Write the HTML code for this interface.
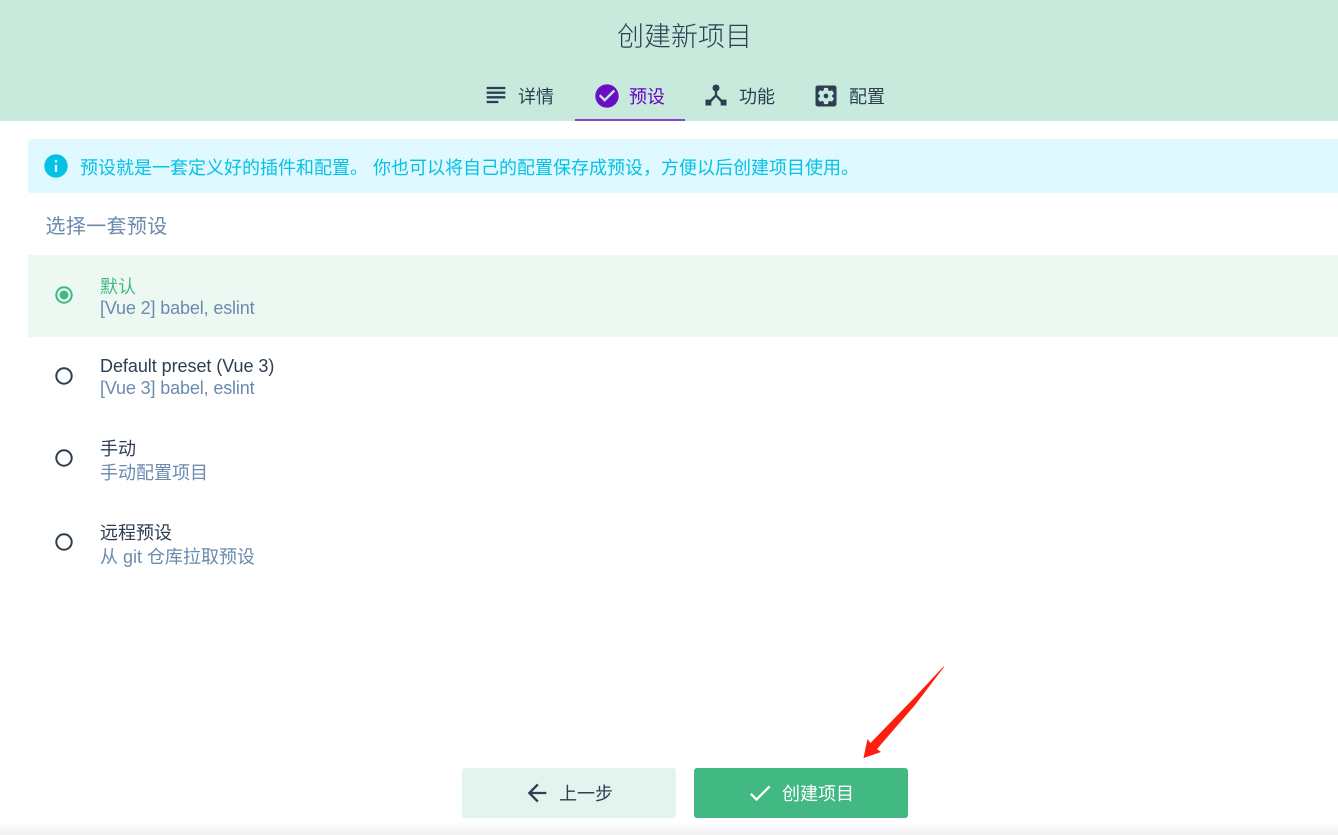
<!DOCTYPE html>
<html lang="zh">
<head>
<meta charset="utf-8">
<title>创建新项目</title>
<style>
html,body{margin:0;padding:0;width:1338px;height:835px;overflow:hidden;background:#fff}
body{position:relative;font-family:"Liberation Sans","Noto Sans CJK SC",sans-serif;color:#2c3e50}
.a{position:absolute;white-space:nowrap}
.t{font-size:18px;line-height:24px}
.sub{color:#6a8bad}
svg{position:absolute;display:block}
.i{width:28px;height:28px}
</style>
</head>
<body>
<div class="a" style="left:0;top:0;width:1338px;height:121px;background:#c7eadd"></div>
<div class="a" style="left:617px;top:17px;font-size:27px;line-height:40px;color:#2c3e50;font-weight:300">创建新项目</div>

<svg class="i" style="left:482px;top:81px" viewBox="0 0 24 24"><path fill="#2c3e50" d="M14 17H4v2h10v-2zm6-8H4v2h16V9zM4 15h16v-2H4v2zM4 5v2h16V5H4z"/></svg>
<div class="a t" style="left:518px;top:85px">详情</div>

<svg class="i" style="left:592.500px;top:81.500px" viewBox="0 0 24 24"><path fill="#6a0dc6" d="M12 2C6.480 2 2 6.480 2 12s4.480 10 10 10 10-4.480 10-10S17.520 2 12 2zm-2 15l-5-5 1.410-1.410L10 14.170l7.590-7.590L19 8l-9 9z"/></svg>
<div class="a t" style="left:629px;top:85px;color:#6a00c8">预设</div>
<div class="a" style="left:575px;top:119px;width:110px;height:2px;background:#8746c8"></div>

<svg class="i" style="left:702px;top:81px" viewBox="0 0 24 24"><path fill="#2c3e50" d="M17 16l-4-4V8.820C14.150 8.400 15 7.310 15 6c0-1.660-1.340-3-3-3S9 4.340 9 6c0 1.310.850 2.400 2 2.820V12l-4 4H3v5h5v-3.050l4-4.200 4 4.200V21h5v-5h-4z"/></svg>
<div class="a t" style="left:739px;top:85px">功能</div>

<svg class="i" style="left:812px;top:81.500px" viewBox="0 0 24 24"><path fill="#2c3e50" d="M12 10c-1.100 0-2 .9-2 2s.9 2 2 2 2-.9 2-2-.9-2-2-2zm7-7H5c-1.110 0-2 .9-2 2v14c0 1.100.890 2 2 2h14c1.110 0 2-.9 2-2V5c0-1.100-.890-2-2-2zm-1.750 9c0 .230-.020.460-.050.680l1.480 1.160c.130.110.170.300.080.450l-1.400 2.420c-.090.150-.270.210-.430.150l-1.740-.7c-.360.280-.760.510-1.180.690l-.260 1.850c-.030.170-.180.300-.350.300h-2.800c-.170 0-.320-.130-.350-.290l-.260-1.850c-.430-.180-.820-.410-1.180-.690l-1.740.7c-.160.060-.340 0-.430-.150l-1.400-2.420c-.090-.150-.050-.340.080-.450l1.480-1.160c-.030-.230-.050-.460-.050-.690 0-.230.020-.460.050-.680l-1.480-1.160c-.130-.110-.170-.300-.080-.450l1.400-2.420c.090-.150.270-.210.430-.150l1.740.7c.360-.280.760-.510 1.180-.690l.260-1.850c.030-.170.180-.300.350-.300h2.800c.170 0 .320.130.350.290l.260 1.850c.430.180.820.410 1.180.690l1.740-.7c.160-.060.340 0 .430.150l1.400 2.420c.090.150.050.340-.080.450l-1.480 1.160c.030.230.050.460.050.690z"/></svg>
<div class="a t" style="left:849px;top:85px">配置</div>

<div class="a" style="left:28px;top:139px;width:1310px;height:54px;background:#e0f8ff;border-radius:3px 0 0 3px"></div>
<svg class="i" style="left:41.500px;top:151.500px" viewBox="0 0 24 24"><path fill="#03c2e6" d="M12 2C6.480 2 2 6.480 2 12s4.480 10 10 10 10-4.480 10-10S17.520 2 12 2zm1 15h-2v-6h2v6zm0-8h-2V7h2v2z"/></svg>
<div class="a t" style="left:80px;top:156px;color:#03c2e6">预设就是一套定义好的插件和配置。 你也可以将自己的配置保存成预设，方便以后创建项目使用。</div>

<div class="a sub" style="left:45.500px;top:214.500px;font-size:20px;line-height:24px;letter-spacing:.35px">选择一套预设</div>

<div class="a" style="left:28px;top:255px;width:1310px;height:82px;background:#eef8f3"></div>
<svg style="left:55px;top:286px" width="18" height="18" viewBox="0 0 18 18"><circle cx="9" cy="9" r="7.700" fill="none" stroke="#42b983" stroke-width="2"/><circle cx="9" cy="9" r="4.500" fill="#42b983"/></svg>
<div class="a t" style="left:100px;top:275px;color:#42b983">默认</div>
<div class="a t sub" style="left:100px;top:296px;letter-spacing:-.14px">[Vue 2] babel, eslint</div>

<svg style="left:55px;top:367px" width="18" height="18" viewBox="0 0 18 18"><circle cx="9" cy="9" r="7.700" fill="none" stroke="#2c3e50" stroke-width="2"/></svg>
<div class="a t" style="left:100px;top:354px;letter-spacing:-.05px">Default preset (Vue 3)</div>
<div class="a t sub" style="left:100px;top:376px;letter-spacing:-.14px">[Vue 3] babel, eslint</div>

<svg style="left:55px;top:449px" width="18" height="18" viewBox="0 0 18 18"><circle cx="9" cy="9" r="7.700" fill="none" stroke="#2c3e50" stroke-width="2"/></svg>
<div class="a t" style="left:100px;top:437px">手动</div>
<div class="a t sub" style="left:100px;top:461px">手动配置项目</div>

<svg style="left:55px;top:533px" width="18" height="18" viewBox="0 0 18 18"><circle cx="9" cy="9" r="7.700" fill="none" stroke="#2c3e50" stroke-width="2"/></svg>
<div class="a t" style="left:100px;top:521px">远程预设</div>
<div class="a t sub" style="left:100px;top:545px">从 git 仓库拉取预设</div>

<div class="a" style="left:462px;top:768px;width:214px;height:50px;background:#e2f4ed;border-radius:3px"></div>
<svg class="i" style="left:523px;top:779px" viewBox="0 0 24 24"><path fill="#2c3e50" d="M20 11H7.830l5.590-5.590L12 4l-8 8 8 8 1.410-1.410L7.830 13H20v-2z"/></svg>
<div class="a t" style="left:559px;top:782px">上一步</div>

<div class="a" style="left:694px;top:768px;width:214px;height:50px;background:#42b983;border-radius:3px"></div>
<svg class="i" style="left:746px;top:778.500px" viewBox="0 0 24 24"><path fill="#fff" d="M9 16.170L4.830 12l-1.420 1.410L9 19 21 7l-1.410-1.410z"/></svg>
<div class="a t" style="left:782px;top:782px;color:#fff">创建项目</div>

<svg style="left:860px;top:664px" width="88" height="98" viewBox="0 0 88 98"><path fill="#ff1d0d" d="M84 3L55 41 17 85l4 3-17.500 6 4-19 3 4L55 33 83.500 2.500z"/></svg>

<div class="a" style="left:0;top:822px;width:1338px;height:13px;background:linear-gradient(#fff,#f1f1f1)"></div>
</body>
</html>
